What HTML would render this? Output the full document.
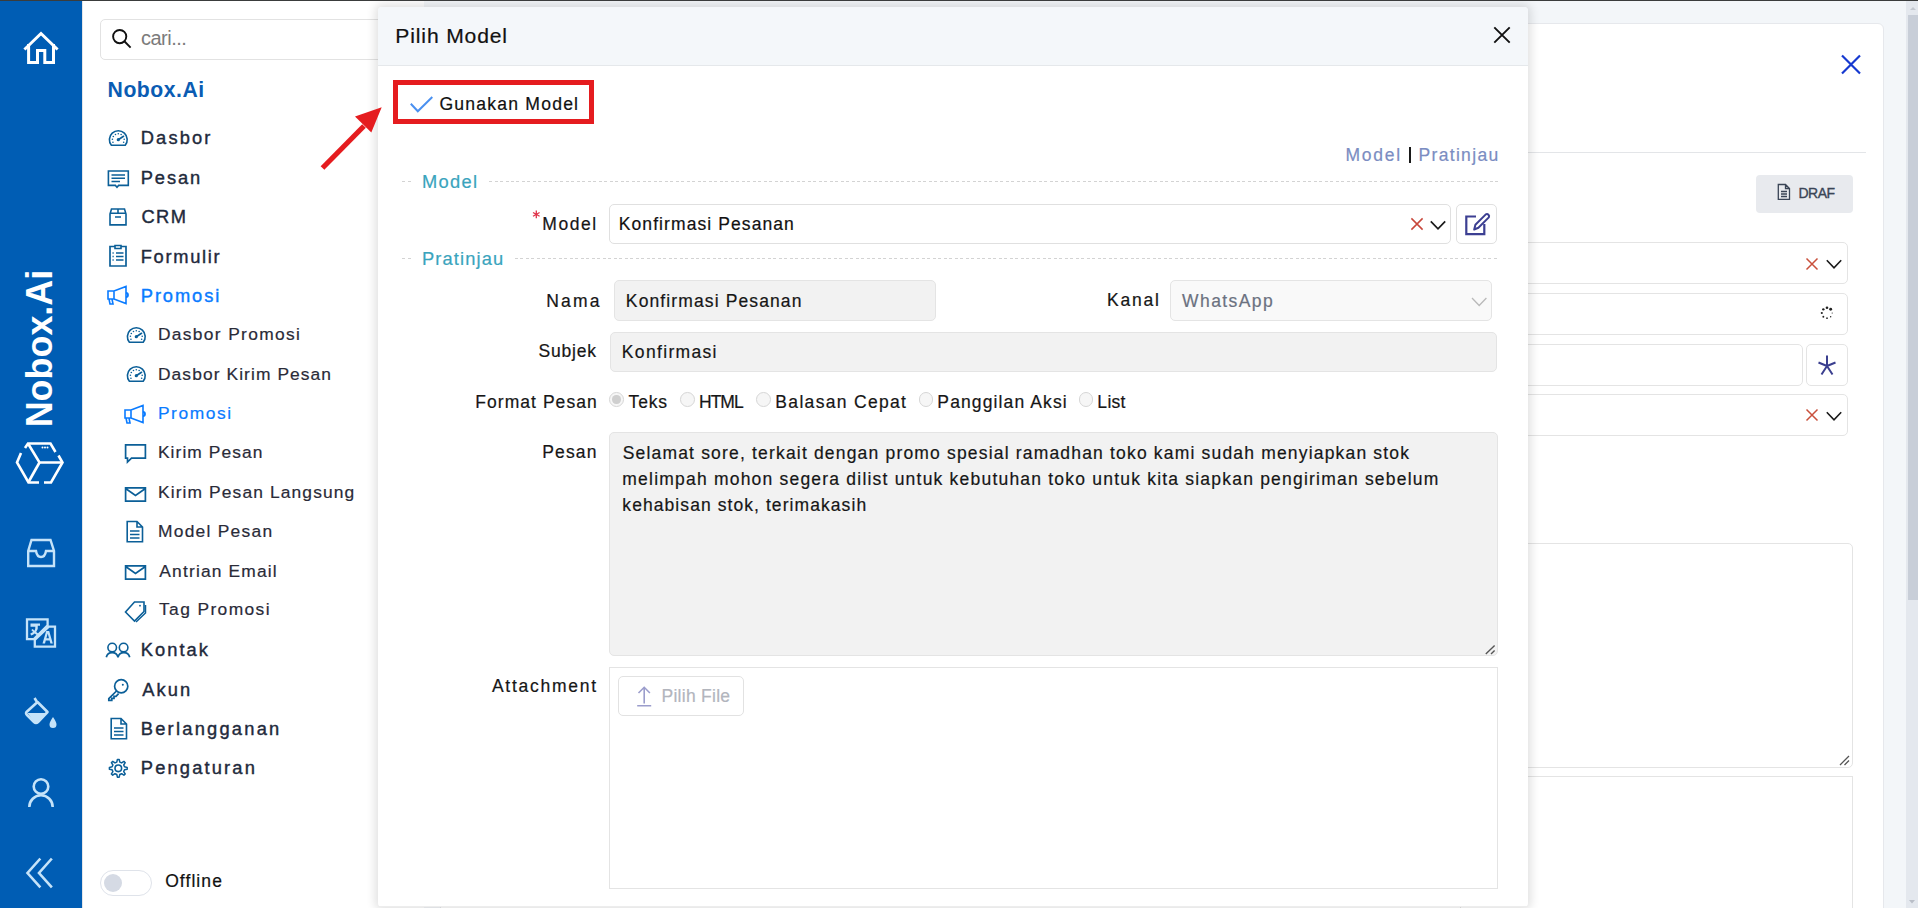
<!DOCTYPE html>
<html><head><meta charset="utf-8"><style>
*{box-sizing:border-box;margin:0;padding:0}
html,body{width:1918px;height:908px;overflow:hidden}
body{position:relative;background:#f3f6f9;font-family:"Liberation Sans",sans-serif;color:#1a1a1a}
.a{position:absolute}
.t{position:absolute;line-height:1;white-space:nowrap}
.b{position:absolute;box-sizing:border-box}
</style></head><body>
<div class="b" style="left:0;top:0;width:1918px;height:1px;background:#3a3c3c;z-index:100"></div>
<div class="b" style="left:1906px;top:1px;width:12px;height:907px;background:#e4e8ee"></div>
<div class="b" style="left:1908px;top:15px;width:10px;height:585px;background:#c8ced8"></div>
<svg class="a" style="left:1906px;top:1px" width="12" height="907"><path d="M4,9 L7,6 L10,9Z" fill="#c3c8d0"/><path d="M3,899 L6,902.5 L9,899Z" fill="#b9bec7"/></svg>
<div class="b" style="left:440px;top:23px;width:1444px;height:900px;background:#fff;border:1px solid #e6e8ec;border-radius:6px"></div>
<div class="b" style="left:460px;top:152px;width:1406px;height:1px;background:#e3e5e8"></div>
<svg class="a" style="left:1838px;top:52px" width="26" height="26"><path d="M4,3.5 L22,21.5 M22,3.5 L4,21.5" stroke="#1639d0" stroke-width="2.2" fill="none"/></svg>
<div class="b" style="left:1756px;top:175px;width:97px;height:38px;background:#e8eaee;border-radius:4px"></div>
<svg class="a" style="left:1776px;top:183px" width="16" height="18"><path d="M2.3,1.5 L9.5,1.5 L13.5,5.5 L13.5,16.3 L2.3,16.3 Z M9.5,1.5 L9.5,5.5 L13.5,5.5 M5,8.5 H11 M5,11 H11 M5,13.5 H11" stroke="#3a4556" stroke-width="1.3" fill="none"/></svg>
<div class="t" style="left:1798.44px;top:186.00px;font-size:14px;color:#3a4556;letter-spacing:-0.500px;font-weight:normal;-webkit-text-stroke:0.35px currentColor;">DRAF</div>

<div class="b" style="left:1460px;top:242px;width:388px;height:42px;background:#fff;border:1px solid #e4e4e4;border-radius:5px"></div>
<div class="b" style="left:1460px;top:293px;width:388px;height:42px;background:#fff;border:1px solid #e4e4e4;border-radius:5px"></div>
<div class="b" style="left:1460px;top:344px;width:343px;height:42px;background:#fff;border:1px solid #e4e4e4;border-radius:5px"></div>
<div class="b" style="left:1806px;top:344px;width:42px;height:42px;background:#fff;border:1px solid #e4e4e4;border-radius:5px"></div>
<div class="b" style="left:1460px;top:394px;width:388px;height:42px;background:#fff;border:1px solid #e4e4e4;border-radius:5px"></div>
<div class="b" style="left:1460px;top:543px;width:393px;height:225px;background:#fff;border:1px solid #e4e4e4;border-radius:5px"></div>
<div class="b" style="left:1460px;top:776px;width:393px;height:184px;background:#fff;border:1px solid #e4e4e4;border-radius:0px"></div>
<svg class="a" style="left:1802px;top:253.5px" width="20" height="20"><path d="M4.5,4.5 L15.5,15.5 M15.5,4.5 L4.5,15.5" stroke="#c9503c" stroke-width="1.5" fill="none"/></svg>
<svg class="a" style="left:1824px;top:254px" width="20" height="20"><path d="M2.8,6.2 L10,13.8 L17.2,6.2" stroke="#1a1a1a" stroke-width="1.6" fill="none"/></svg>
<svg class="a" style="left:1802px;top:405px" width="20" height="20"><path d="M4.5,4.5 L15.5,15.5 M15.5,4.5 L4.5,15.5" stroke="#c9503c" stroke-width="1.5" fill="none"/></svg>
<svg class="a" style="left:1824px;top:405.5px" width="20" height="20"><path d="M2.8,6.2 L10,13.8 L17.2,6.2" stroke="#1a1a1a" stroke-width="1.6" fill="none"/></svg>
<svg class="a" style="left:1817px;top:303px" width="20" height="20"><circle cx="15.2" cy="10.0" r="0.6" fill="#222"/><circle cx="13.67841899966944" cy="13.675490941747903" r="0.72" fill="#222"/><circle cx="10.004140898895812" cy="15.19999835124554" r="0.84" fill="#222"/><circle cx="6.327439446935973" cy="13.681344724971847" r="0.96" fill="#222"/><circle cx="4.800006595016795" cy="10.00828179516573" r="1.08" fill="#222"/><circle cx="6.315731884200181" cy="6.33037216452392" r="1.2" fill="#222"/><circle cx="9.987577313816136" cy="4.800014838783866" r="1.3199999999999998" fill="#222"/><circle cx="13.666692790843799" cy="6.312810829700473" r="1.44" fill="#222"/></svg>
<svg class="a" style="left:1815px;top:353px" width="24" height="24"><path d="M12,2.5 V13 M12,13 L3.5,9.5 M12,13 L20.5,9.5 M12,13 L6.5,21.5 M12,13 L17.5,21.5" stroke="#3b3f8f" stroke-width="2" fill="none"/></svg>
<svg class="a" style="left:1838px;top:753px" width="14" height="14"><path d="M2,12 L11,3 M6.5,12 L11,7.5" stroke="#555" stroke-width="1.3"/></svg>
<div class="b" style="left:0;top:1px;width:82px;height:907px;background:#005db4"></div>
<svg class="a" style="left:0;top:0" width="82" height="908" viewBox="0 0 82 908">
 <g fill="none" stroke="#fff" stroke-width="3" stroke-linejoin="miter" stroke-linecap="square">
  <polyline points="25.5,48.5 41,33.5 56.5,48.5"/>
  <polyline points="28.6,45.5 28.6,62.6 37.5,62.6 37.5,50.5 44.8,50.5 44.8,62.6 53.5,62.6 53.5,45.5"/>
 </g>
 <text x="0" y="0" transform="translate(51.8,427.3) rotate(-90)" font-family="Liberation Sans" font-weight="bold" font-size="36.5" fill="#fff" textLength="157.5" lengthAdjust="spacingAndGlyphs">Nobox.Ai</text>
 <g fill="none" stroke="#fff" stroke-width="2.6" stroke-linecap="butt" stroke-linejoin="miter">
  <polyline points="25,448 28,443.5 50.5,443.5 55.5,452"/>
  <polyline points="21,453 17,462.5 28.5,482.5 39,482.5"/>
  <polyline points="44,482.5 51,482.5 62.5,462.5 58.5,455.5"/>
  <polyline points="28,443.5 39.5,462.5 62.5,462.5"/>
  <line x1="39.5" y1="462.5" x2="28.5" y2="482"/>
 </g>
 <g fill="#fff"><circle cx="42.5" cy="447.5" r="1"/><circle cx="45" cy="447.5" r="1"/><circle cx="47.5" cy="447.5" r="1"/></g>
 <g fill="none" stroke="#c5e3f9" stroke-width="2.4">
  <path d="M31.5,540 L50.5,540 L54,551 L54,566 L28.2,566 L28.2,551 Z"/>
  <path d="M28.2,551 L36,551 Q37,557 41,557 Q45,557 46,551 L54,551"/>
 </g>
 <g fill="none" stroke="#c5e3f9" stroke-width="2.3" stroke-linejoin="miter">
  <path d="M27,619.3 H47.6 V625.2 L33.6,639.2 H27 Z"/>
  <path d="M34.8,646.6 V639.8 L48.8,626.6 H55 V646.6 Z"/>
 </g>
 <g fill="#c5e3f9">
  <path d="M30.5,623.5 h9.5 v2.2 h-2.2 q0.6,3.6 -1.6,6.4 l2.2,1.6 -1.3,1.6 -2.4,-1.8 q-1.6,1.4 -3.6,2 l-0.8,-2 q1.6,-0.5 2.8,-1.4 l-1.8,-2 1.5,-1.2 1.6,1.8 q1.2,-1.8 0.9,-3.9 h-4.8 z"/>
  <path d="M42.5,643.5 L46.2,631 L49.2,631 L52.8,643.5 L50.4,643.5 L49.6,640.5 L45.8,640.5 L45,643.5 Z M46.4,638.3 H49 L47.7,633.6 Z"/>
 </g>
 <g fill="none" stroke="#c5e3f9" stroke-width="2.6" stroke-linejoin="round">
  <path d="M34.5,698 L37,702 M26.5,712 L37.5,702 L47.5,712 L38,722 Q36,724 34,722 L27,715 Q25.5,713.5 26.5,712 Z"/>
 </g>
 <path fill="#c5e3f9" d="M27.5,713 L47,713 L38,722 Q36,724 34,722 Z"/>
 <path fill="#c5e3f9" d="M53,717 Q56.5,722 56.5,724.5 A3.5,3.5 0 0 1 49.5,724.5 Q49.5,722 53,717 Z"/>
 <g fill="none" stroke="#c5e3f9" stroke-width="2.6">
  <circle cx="41" cy="786.5" r="7.3"/>
  <path d="M29.3,807 A11.7,11.7 0 0 1 52.7,807"/>
 </g>
 <g fill="none" stroke="#c5e3f9" stroke-width="2.6" stroke-linecap="square">
  <polyline points="39.5,859.5 27.5,873 39.5,886.5"/>
  <polyline points="51,859.5 39,873 51,886.5"/>
 </g>
</svg>
<div class="b" style="left:82px;top:1px;width:342px;height:907px;background:#fff;border-left:1px solid #e3e5e8"></div><div class="b" style="left:100px;top:19px;width:320px;height:41px;background:#fff;border:1px solid #e2e2e2;border-radius:5px"></div><svg class="a" style="left:108px;top:26px" width="28" height="26"><circle cx="11.7" cy="10.6" r="6.6" stroke="#111" stroke-width="1.9" fill="none"/><path d="M16.6,15.5 L22.6,21.6" stroke="#111" stroke-width="1.9"/></svg><div class="t" style="left:140.95px;top:28.00px;font-size:20px;color:#7b7b7b;letter-spacing:-0.492px;font-weight:normal;">cari...</div>
<div class="t" style="left:107.57px;top:79.00px;font-size:21.2px;color:#0a5cb3;letter-spacing:0.514px;font-weight:bold;">Nobox.Ai</div>
<div class="t" style="left:140.79px;top:129.00px;font-size:18.3px;color:#1f2a3c;letter-spacing:2.122px;font-weight:normal;-webkit-text-stroke:0.4px currentColor;">Dasbor</div>
<div class="t" style="left:140.79px;top:169.00px;font-size:18.3px;color:#1f2a3c;letter-spacing:1.893px;font-weight:normal;-webkit-text-stroke:0.4px currentColor;">Pesan</div>
<div class="t" style="left:141.39px;top:208.00px;font-size:18.3px;color:#1f2a3c;letter-spacing:1.423px;font-weight:normal;-webkit-text-stroke:0.4px currentColor;">CRM</div>
<div class="t" style="left:140.79px;top:248.00px;font-size:18.3px;color:#1f2a3c;letter-spacing:1.674px;font-weight:normal;-webkit-text-stroke:0.4px currentColor;">Formulir</div>
<div class="t" style="left:140.79px;top:287.00px;font-size:18.3px;color:#0a7bff;letter-spacing:1.905px;font-weight:normal;-webkit-text-stroke:0.4px currentColor;">Promosi</div>
<div class="t" style="left:140.79px;top:641.00px;font-size:18.3px;color:#1f2a3c;letter-spacing:2.030px;font-weight:normal;-webkit-text-stroke:0.4px currentColor;">Kontak</div>
<div class="t" style="left:142.25px;top:681.00px;font-size:18.3px;color:#1f2a3c;letter-spacing:2.070px;font-weight:normal;-webkit-text-stroke:0.4px currentColor;">Akun</div>
<div class="t" style="left:140.79px;top:720.00px;font-size:18.3px;color:#1f2a3c;letter-spacing:2.235px;font-weight:normal;-webkit-text-stroke:0.4px currentColor;">Berlangganan</div>
<div class="t" style="left:140.79px;top:759.00px;font-size:18.3px;color:#1f2a3c;letter-spacing:2.171px;font-weight:normal;-webkit-text-stroke:0.4px currentColor;">Pengaturan</div>
<div class="t" style="left:157.96px;top:326.00px;font-size:17.4px;color:#2a2b38;letter-spacing:1.327px;font-weight:normal;-webkit-text-stroke:0.2px currentColor;">Dasbor Promosi</div>
<div class="t" style="left:157.96px;top:366.00px;font-size:17.4px;color:#2a2b38;letter-spacing:1.085px;font-weight:normal;-webkit-text-stroke:0.2px currentColor;">Dasbor Kirim Pesan</div>
<div class="t" style="left:157.96px;top:405.00px;font-size:17.4px;color:#0a7bff;letter-spacing:1.566px;font-weight:normal;-webkit-text-stroke:0.2px currentColor;">Promosi</div>
<div class="t" style="left:157.96px;top:444.00px;font-size:17.4px;color:#2a2b38;letter-spacing:1.064px;font-weight:normal;-webkit-text-stroke:0.2px currentColor;">Kirim Pesan</div>
<div class="t" style="left:157.96px;top:484.00px;font-size:17.4px;color:#2a2b38;letter-spacing:1.120px;font-weight:normal;-webkit-text-stroke:0.2px currentColor;">Kirim Pesan Langsung</div>
<div class="t" style="left:157.96px;top:523.00px;font-size:17.4px;color:#2a2b38;letter-spacing:1.259px;font-weight:normal;-webkit-text-stroke:0.2px currentColor;">Model Pesan</div>
<div class="t" style="left:159.36px;top:563.00px;font-size:17.4px;color:#2a2b38;letter-spacing:1.161px;font-weight:normal;-webkit-text-stroke:0.2px currentColor;">Antrian Email</div>
<div class="t" style="left:159.01px;top:601.00px;font-size:17.4px;color:#2a2b38;letter-spacing:1.387px;font-weight:normal;-webkit-text-stroke:0.2px currentColor;">Tag Promosi</div>
<svg class="a" style="left:108px;top:129px" width="21" height="18" viewBox="0 0 21 18"><g fill="none" stroke="#0b5f98" stroke-width="1.6"><path d="M3.38,16.299999999999997 A8.9,8.9 0 1 1 17.22,16.299999999999997 Z" stroke-width="1.6"/><circle cx="4.95" cy="13.19" r="0.8" fill="#0b5f98" stroke="none"/><circle cx="4.41" cy="10.31" r="0.8" fill="#0b5f98" stroke="none"/><circle cx="5.32" cy="7.53" r="0.8" fill="#0b5f98" stroke="none"/><circle cx="7.46" cy="5.53" r="0.8" fill="#0b5f98" stroke="none"/><circle cx="10.30" cy="4.80" r="0.8" fill="#0b5f98" stroke="none"/><circle cx="13.14" cy="5.53" r="0.8" fill="#0b5f98" stroke="none"/><circle cx="16.19" cy="10.31" r="0.8" fill="#0b5f98" stroke="none"/><circle cx="15.65" cy="13.19" r="0.8" fill="#0b5f98" stroke="none"/><path d="M10.30,10.70 L15.50,7.32" stroke-width="1.7" stroke-linecap="round"/><circle cx="10.3" cy="10.7" r="1.6" fill="#0b5f98" stroke="none"/></g></svg><svg class="a" style="left:125.5px;top:326px" width="21" height="18" viewBox="0 0 21 18"><g fill="none" stroke="#0b5f98" stroke-width="1.6"><path d="M3.38,16.299999999999997 A8.9,8.9 0 1 1 17.22,16.299999999999997 Z" stroke-width="1.6"/><circle cx="4.95" cy="13.19" r="0.8" fill="#0b5f98" stroke="none"/><circle cx="4.41" cy="10.31" r="0.8" fill="#0b5f98" stroke="none"/><circle cx="5.32" cy="7.53" r="0.8" fill="#0b5f98" stroke="none"/><circle cx="7.46" cy="5.53" r="0.8" fill="#0b5f98" stroke="none"/><circle cx="10.30" cy="4.80" r="0.8" fill="#0b5f98" stroke="none"/><circle cx="13.14" cy="5.53" r="0.8" fill="#0b5f98" stroke="none"/><circle cx="16.19" cy="10.31" r="0.8" fill="#0b5f98" stroke="none"/><circle cx="15.65" cy="13.19" r="0.8" fill="#0b5f98" stroke="none"/><path d="M10.30,10.70 L15.50,7.32" stroke-width="1.7" stroke-linecap="round"/><circle cx="10.3" cy="10.7" r="1.6" fill="#0b5f98" stroke="none"/></g></svg><svg class="a" style="left:125.5px;top:365px" width="21" height="18" viewBox="0 0 21 18"><g fill="none" stroke="#0b5f98" stroke-width="1.6"><path d="M3.38,16.299999999999997 A8.9,8.9 0 1 1 17.22,16.299999999999997 Z" stroke-width="1.6"/><circle cx="4.95" cy="13.19" r="0.8" fill="#0b5f98" stroke="none"/><circle cx="4.41" cy="10.31" r="0.8" fill="#0b5f98" stroke="none"/><circle cx="5.32" cy="7.53" r="0.8" fill="#0b5f98" stroke="none"/><circle cx="7.46" cy="5.53" r="0.8" fill="#0b5f98" stroke="none"/><circle cx="10.30" cy="4.80" r="0.8" fill="#0b5f98" stroke="none"/><circle cx="13.14" cy="5.53" r="0.8" fill="#0b5f98" stroke="none"/><circle cx="16.19" cy="10.31" r="0.8" fill="#0b5f98" stroke="none"/><circle cx="15.65" cy="13.19" r="0.8" fill="#0b5f98" stroke="none"/><path d="M10.30,10.70 L15.50,7.32" stroke-width="1.7" stroke-linecap="round"/><circle cx="10.3" cy="10.7" r="1.6" fill="#0b5f98" stroke="none"/></g></svg><svg class="a" style="left:106px;top:169px" width="24" height="22" viewBox="0 0 24 22"><g fill="none" stroke="#0b5f98" stroke-width="1.6"><path d="M2.4,2 H22.3 V16.4 H12.6 L11,18.2 L9.4,16.4 H2.4 Z"/><path d="M5.5,6 H19 M5.5,9.2 H19 M5.5,12.4 H14" stroke-width="1.5"/></g></svg><svg class="a" style="left:107px;top:207px" width="22" height="21" viewBox="0 0 22 21"><g fill="none" stroke="#0b5f98" stroke-width="1.6"><path d="M3,7 L4.5,2 H17.5 L19,7 V17.9 H3 Z M3,6.3 H19 M11,2 V6.3 M8,10 H14"/></g></svg><svg class="a" style="left:107px;top:244px" width="22" height="24" viewBox="0 0 22 24"><g fill="none" stroke="#0b5f98" stroke-width="1.6"><path d="M3,2.5 H19 V22 H3 Z" stroke-width="1.7"/><path d="M8,1.5 H14 V4.5 H8 Z" fill="#fff"/><path d="M9,9 H16.5 M9,12.5 H16.5 M9,16 H16.5" stroke-width="1.5"/><path d="M5.5,9 H6.7 M5.5,12.5 H6.7 M5.5,16 H6.7" stroke-width="1.5"/></g></svg><svg class="a" style="left:106px;top:285px" width="25" height="21" viewBox="0 0 25 21"><g fill="none" stroke="#0a7bff" stroke-width="1.6"><path d="M2,6 H8 L20,1.5 V18.5 L8,14 H2 Z M8,6 V14 M3,14 L4,19 H7 L6,14" stroke-width="1.6"/><path d="M20,8 A2,2 0 0 1 20,12" stroke-width="1.8"/></g></svg><svg class="a" style="left:123px;top:403.5px" width="25" height="21" viewBox="0 0 25 21"><g fill="none" stroke="#0a7bff" stroke-width="1.6"><path d="M2,6 H8 L20,1.5 V18.5 L8,14 H2 Z M8,6 V14 M3,14 L4,19 H7 L6,14" stroke-width="1.6"/><path d="M20,8 A2,2 0 0 1 20,12" stroke-width="1.8"/></g></svg><svg class="a" style="left:123px;top:443px" width="25" height="22" viewBox="0 0 25 22"><g fill="none" stroke="#0b5f98" stroke-width="1.6"><path d="M2.6,1.8 H22.4 V15.2 H8.5 L4.5,19 V15.2 H2.6 Z" stroke-width="1.7"/></g></svg><svg class="a" style="left:123px;top:486px" width="25" height="18" viewBox="0 0 25 18"><g fill="none" stroke="#0b5f98" stroke-width="1.6"><path d="M2.6,1.8 H22.4 V15.2 H2.6 Z M2.6,2.5 L12.5,9.5 L22.4,2.5" stroke-width="1.7"/></g></svg><svg class="a" style="left:123px;top:563.5px" width="25" height="18" viewBox="0 0 25 18"><g fill="none" stroke="#0b5f98" stroke-width="1.6"><path d="M2.6,1.8 H22.4 V15.2 H2.6 Z M2.6,2.5 L12.5,9.5 L22.4,2.5" stroke-width="1.7"/></g></svg><svg class="a" style="left:125px;top:520px" width="21" height="24" viewBox="0 0 21 24"><g fill="none" stroke="#0b5f98" stroke-width="1.6"><path d="M2.2,1.5 H12 L17.5,7 V21.8 H2.2 Z M12,1.5 V7 H17.5" stroke-width="1.6"/><path d="M5,11 H14.5 M5,14.5 H14.5 M5,18 H14.5" stroke-width="1.5"/></g></svg><svg class="a" style="left:108.5px;top:717.3px" width="21" height="24" viewBox="0 0 21 24"><g fill="none" stroke="#0b5f98" stroke-width="1.6"><path d="M2.2,1.5 H12 L17.5,7 V21.8 H2.2 Z M12,1.5 V7 H17.5" stroke-width="1.6"/><path d="M5,11 H14.5 M5,14.5 H14.5 M5,18 H14.5" stroke-width="1.5"/></g></svg><svg class="a" style="left:123px;top:600px" width="25" height="23" viewBox="0 0 25 23"><g fill="none" stroke="#0b5f98" stroke-width="1.6"><path d="M2.5,12 L11.5,2 H21 V11.5 L11.5,21 Z" stroke-width="1.6"/><circle cx="17" cy="5.7" r="0.9" fill="#0b5f98" stroke="none"/><path d="M22.5,5 V13 L13,22" stroke-width="1.5"/></g></svg><svg class="a" style="left:104px;top:641px" width="28" height="18" viewBox="0 0 28 18"><g fill="none" stroke="#0b5f98" stroke-width="1.6"><circle cx="8.2" cy="6.6" r="4.3"/><circle cx="19.6" cy="6.6" r="4.3"/><path d="M2.3,16.3 A6,6 0 0 1 14,16.3 A6,6 0 0 1 25.7,16.3" stroke-width="1.7"/></g></svg><svg class="a" style="left:106px;top:678px" width="24" height="24" viewBox="0 0 24 24"><g fill="none" stroke="#0b5f98" stroke-width="1.6"><circle cx="15.2" cy="8.3" r="6.6" stroke-width="1.7"/><circle cx="16.8" cy="6.7" r="1" fill="#0b5f98" stroke="none"/><path d="M10.5,13 L2.8,20.7 V22.3 H5.8 V20.3 H8 V18.3 H10 L12.6,15.6" stroke-width="1.7"/></g></svg><svg class="a" style="left:107px;top:758px" width="23" height="21" viewBox="0 0 23 21"><g fill="none" stroke="#0b5f98" stroke-width="1.6"><path d="M10.4,1.4 L12.2,1.4 L12.8,4.1 L14.6,4.9 L16.9,3.4 L18.2,4.7 L16.7,7 L17.5,8.8 L20.2,9.4 L20.2,11.2 L17.5,11.8 L16.7,13.6 L18.2,15.9 L16.9,17.2 L14.6,15.7 L12.8,16.5 L12.2,19.2 L10.4,19.2 L9.8,16.5 L8,15.7 L5.7,17.2 L4.4,15.9 L5.9,13.6 L5.1,11.8 L2.4,11.2 L2.4,9.4 L5.1,8.8 L5.9,7 L4.4,4.7 L5.7,3.4 L8,4.9 L9.8,4.1 Z" stroke-width="1.5" stroke-linejoin="round"/><circle cx="11.3" cy="10.3" r="3.3" stroke-width="1.6"/></g></svg><div class="b" style="left:100px;top:869.5px;width:52px;height:26px;border:1.5px solid #dfe3ea;border-radius:13px;background:#fff"></div><div class="b" style="left:104px;top:873.5px;width:18px;height:18px;border-radius:50%;background:#d5dae4"></div><div class="t" style="left:165.17px;top:873.00px;font-size:17.5px;color:#111;letter-spacing:1.075px;font-weight:normal;-webkit-text-stroke:0.2px currentColor;">Offline</div>

<div class="b" style="left:378px;top:7px;width:1150px;height:900px;background:#fff;border-radius:4px;box-shadow:0 0 10px 3px rgba(0,0,0,0.12)"></div><div class="b" style="left:378px;top:7px;width:1150px;height:59px;background:#f4f7fa;border-bottom:1px solid #e5e8eb;border-radius:4px 4px 0 0"></div><div class="b" style="left:378px;top:906px;width:1150px;height:1px;background:#ededed"></div><div class="t" style="left:395.36px;top:25.00px;font-size:21.1px;color:#111;letter-spacing:0.853px;font-weight:normal;-webkit-text-stroke:0.2px currentColor;">Pilih Model</div>
<svg class="a" style="left:1490px;top:23px" width="24" height="24"><path d="M4.3,4.3 L19.7,19.7 M19.7,4.3 L4.3,19.7" stroke="#111" stroke-width="1.9" fill="none"/></svg><div class="b" style="left:392.5px;top:80.2px;width:201.7px;height:44.3px;border:5px solid #e51c1f"></div><svg class="a" style="left:405px;top:92px" width="32" height="24"><path d="M5.8,11.8 L12.8,19.3 L27.3,5" stroke="#4a90f0" stroke-width="2" fill="none"/></svg><div class="t" style="left:439.42px;top:96.00px;font-size:17.6px;color:#111;letter-spacing:1.201px;font-weight:normal;-webkit-text-stroke:0.2px currentColor;">Gunakan Model</div>
<svg class="a" style="left:300px;top:90px" width="100" height="100"><path d="M22.5,78 L64,36" stroke="#e51c1f" stroke-width="5.2" fill="none"/><path d="M81.7,17.3 L55,26.5 L71.3,42.5 Z" fill="#e51c1f"/></svg><div class="t" style="left:1345.56px;top:147.00px;font-size:17.5px;color:#7b8dc2;letter-spacing:1.734px;font-weight:normal;-webkit-text-stroke:0.2px currentColor;">Model</div>
<div class="b" style="left:1408.5px;top:147px;width:2px;height:16px;background:#1a1a1a"></div><div class="t" style="left:1418.56px;top:147.00px;font-size:17.5px;color:#7b8dc2;letter-spacing:1.318px;font-weight:normal;-webkit-text-stroke:0.2px currentColor;">Pratinjau</div>
<div class="b" style="left:401.5px;top:181px;width:10.5px;height:1px;background:repeating-linear-gradient(90deg,#d3d3d3 0 3px,transparent 3px 5.5px)"></div><div class="b" style="left:488.5px;top:181px;width:1009.5px;height:1px;background:repeating-linear-gradient(90deg,#d3d3d3 0 3px,transparent 3px 5.5px)"></div><div class="b" style="left:401.5px;top:258px;width:10.5px;height:1px;background:repeating-linear-gradient(90deg,#d3d3d3 0 3px,transparent 3px 5.5px)"></div><div class="b" style="left:514.5px;top:258px;width:983.5px;height:1px;background:repeating-linear-gradient(90deg,#d3d3d3 0 3px,transparent 3px 5.5px)"></div><div class="t" style="left:421.89px;top:173.00px;font-size:18.3px;color:#3aa4bd;letter-spacing:1.369px;font-weight:normal;-webkit-text-stroke:0.2px currentColor;">Model</div>
<div class="t" style="left:421.89px;top:250.00px;font-size:18.3px;color:#3aa4bd;letter-spacing:1.138px;font-weight:normal;-webkit-text-stroke:0.2px currentColor;">Pratinjau</div>
<svg class="a" style="left:530px;top:208px" width="13" height="13"><path d="M6.3,2.6 V10.2 M3,4.5 L9.6,8.3 M9.6,4.5 L3,8.3" stroke="#e0344a" stroke-width="1.3" fill="none"/></svg><div class="t" style="left:542.36px;top:216.00px;font-size:17.5px;color:#161616;letter-spacing:1.559px;font-weight:normal;-webkit-text-stroke:0.2px currentColor;">Model</div>
<div class="t" style="left:546.16px;top:293.00px;font-size:17.5px;color:#161616;letter-spacing:2.240px;font-weight:normal;-webkit-text-stroke:0.2px currentColor;">Nama</div>
<div class="t" style="left:1107.06px;top:292.00px;font-size:17.5px;color:#161616;letter-spacing:1.792px;font-weight:normal;-webkit-text-stroke:0.2px currentColor;">Kanal</div>
<div class="t" style="left:538.61px;top:343.00px;font-size:17.5px;color:#161616;letter-spacing:0.756px;font-weight:normal;-webkit-text-stroke:0.2px currentColor;">Subjek</div>
<div class="t" style="left:475.26px;top:394.00px;font-size:17.5px;color:#161616;letter-spacing:1.049px;font-weight:normal;-webkit-text-stroke:0.2px currentColor;">Format Pesan</div>
<div class="t" style="left:542.16px;top:444.00px;font-size:17.5px;color:#161616;letter-spacing:1.181px;font-weight:normal;-webkit-text-stroke:0.2px currentColor;">Pesan</div>
<div class="t" style="left:491.96px;top:678.00px;font-size:17.5px;color:#161616;letter-spacing:1.741px;font-weight:normal;-webkit-text-stroke:0.2px currentColor;">Attachment</div>
<div class="b" style="left:609.4px;top:204.4px;width:842.1px;height:40.0px;background:#fff;border:1px solid #e0e0e0;border-radius:5px"></div><div class="t" style="left:618.76px;top:216.00px;font-size:17.5px;color:#111;letter-spacing:1.086px;font-weight:normal;-webkit-text-stroke:0.2px currentColor;">Konfirmasi Pesanan</div>
<svg class="a" style="left:1406.5px;top:214.2px" width="20" height="20"><path d="M4.4,4.4 L15.6,15.6 M15.6,4.4 L4.4,15.6" stroke="#c8463a" stroke-width="1.5" fill="none"/></svg><svg class="a" style="left:1428.2px;top:215.2px" width="20" height="20"><path d="M2.8,6.3 L10,13.8 L17.2,6.3" stroke="#1a1a1a" stroke-width="1.7" fill="none"/></svg><div class="b" style="left:1456.4px;top:204.4px;width:41.0px;height:40.0px;background:#fff;border:1px solid #e0e0e0;border-radius:5px"></div><svg class="a" style="left:1461px;top:209px" width="30" height="30"><path d="M15,7.5 H5.3 V25.1 H23.3 V15" stroke="#3c3f92" stroke-width="2.2" fill="none"/><path d="M13.2,20.5 L14.4,15.8 L24.8,5.4 A2.2,2.2 0 0 1 27.8,8.4 L17.4,18.8 Z" stroke="#3c3f92" stroke-width="2" fill="none" stroke-linejoin="round"/></svg><div class="b" style="left:613.5px;top:280.3px;width:322.20000000000005px;height:41.19999999999999px;background:#f2f2f2;border:1px solid #e4e4e4;border-radius:5px"></div><div class="t" style="left:625.86px;top:293.00px;font-size:17.5px;color:#161616;letter-spacing:1.115px;font-weight:normal;-webkit-text-stroke:0.2px currentColor;">Konfirmasi Pesanan</div>
<div class="b" style="left:1170.3px;top:280.3px;width:322.10000000000014px;height:41.099999999999966px;background:#f9f9f9;border:1px solid #e4e4e4;border-radius:5px"></div><div class="t" style="left:1182.11px;top:293.00px;font-size:17.5px;color:#6b7180;letter-spacing:1.410px;font-weight:normal;-webkit-text-stroke:0.2px currentColor;">WhatsApp</div>
<svg class="a" style="left:1469px;top:292px" width="20" height="18"><path d="M3,6 L10.2,13.5 L17.4,6" stroke="#b9b9b9" stroke-width="1.3" fill="none"/></svg><div class="b" style="left:609.5px;top:331.8px;width:887.3px;height:39.89999999999998px;background:#f2f2f2;border:1px solid #e4e4e4;border-radius:5px"></div><div class="t" style="left:621.86px;top:344.00px;font-size:17.5px;color:#161616;letter-spacing:1.326px;font-weight:normal;-webkit-text-stroke:0.2px currentColor;">Konfirmasi</div>
<div class="b" style="left:609.2px;top:392px;width:14.8px;height:14.8px;border-radius:50%;border:1px solid #d6d6d6;background:#f6f6f6"></div><div class="b" style="left:612.4000000000001px;top:395.2px;width:8.4px;height:8.4px;border-radius:50%;background:#cfcfcf"></div><div class="t" style="left:628.61px;top:394.00px;font-size:17.5px;color:#161616;letter-spacing:0.815px;font-weight:normal;-webkit-text-stroke:0.2px currentColor;">Teks</div>
<div class="b" style="left:679.8px;top:392px;width:14.8px;height:14.8px;border-radius:50%;border:1px solid #d6d6d6;background:#f6f6f6"></div><div class="t" style="left:698.96px;top:394.00px;font-size:17.5px;color:#161616;letter-spacing:-0.962px;font-weight:normal;-webkit-text-stroke:0.2px currentColor;">HTML</div>
<div class="b" style="left:756.2px;top:392px;width:14.8px;height:14.8px;border-radius:50%;border:1px solid #d6d6d6;background:#f6f6f6"></div><div class="t" style="left:775.36px;top:394.00px;font-size:17.5px;color:#161616;letter-spacing:1.315px;font-weight:normal;-webkit-text-stroke:0.2px currentColor;">Balasan Cepat</div>
<div class="b" style="left:918.7px;top:392px;width:14.8px;height:14.8px;border-radius:50%;border:1px solid #d6d6d6;background:#f6f6f6"></div><div class="t" style="left:937.36px;top:394.00px;font-size:17.5px;color:#161616;letter-spacing:1.117px;font-weight:normal;-webkit-text-stroke:0.2px currentColor;">Panggilan Aksi</div>
<div class="b" style="left:1078.7px;top:392px;width:14.8px;height:14.8px;border-radius:50%;border:1px solid #d6d6d6;background:#f6f6f6"></div><div class="t" style="left:1097.36px;top:394.00px;font-size:17.5px;color:#161616;letter-spacing:0.288px;font-weight:normal;-webkit-text-stroke:0.2px currentColor;">List</div>
<div class="b" style="left:609.4px;top:432.4px;width:888.3000000000001px;height:223.89999999999998px;background:#f2f2f2;border:1px solid #e4e4e4;border-radius:5px"></div><div class="t" style="left:622.71px;top:445.00px;font-size:17.5px;color:#161616;letter-spacing:1.178px;font-weight:normal;-webkit-text-stroke:0.2px currentColor;">Selamat sore, terkait dengan promo spesial ramadhan toko kami sudah menyiapkan stok</div>
<div class="t" style="left:622.32px;top:471.00px;font-size:17.5px;color:#161616;letter-spacing:1.208px;font-weight:normal;-webkit-text-stroke:0.2px currentColor;">melimpah mohon segera dilist untuk kebutuhan toko untuk kita siapkan pengiriman sebelum</div>
<div class="t" style="left:622.32px;top:497.00px;font-size:17.5px;color:#161616;letter-spacing:1.072px;font-weight:normal;-webkit-text-stroke:0.2px currentColor;">kehabisan stok, terimakasih</div>
<svg class="a" style="left:1482px;top:642px" width="16" height="16"><path d="M3.8,11.9 L12.6,3.5 M9,11.9 L12.6,8.5" stroke="#555" stroke-width="1.4" fill="none"/></svg><div class="b" style="left:609.4px;top:666.5px;width:888.3000000000001px;height:222.89999999999998px;background:#fff;border:1px solid #e4e4e4;border-radius:0px"></div><div class="b" style="left:618.4px;top:676.3px;width:125.20000000000005px;height:40.10000000000002px;background:#fff;border:1px solid #e2e2e2;border-radius:5px"></div><svg class="a" style="left:634px;top:684px" width="22" height="24"><path d="M10.2,3.5 V19.5 M4.5,9 L10.2,3.3 L15.9,9 M3.2,21.8 H17.2" stroke="#9b9dcc" stroke-width="1.6" fill="none"/></svg><div class="t" style="left:661.46px;top:688.00px;font-size:17.5px;color:#b2b5bd;letter-spacing:0.276px;font-weight:normal;-webkit-text-stroke:0.2px currentColor;">Pilih File</div>

</body></html>
